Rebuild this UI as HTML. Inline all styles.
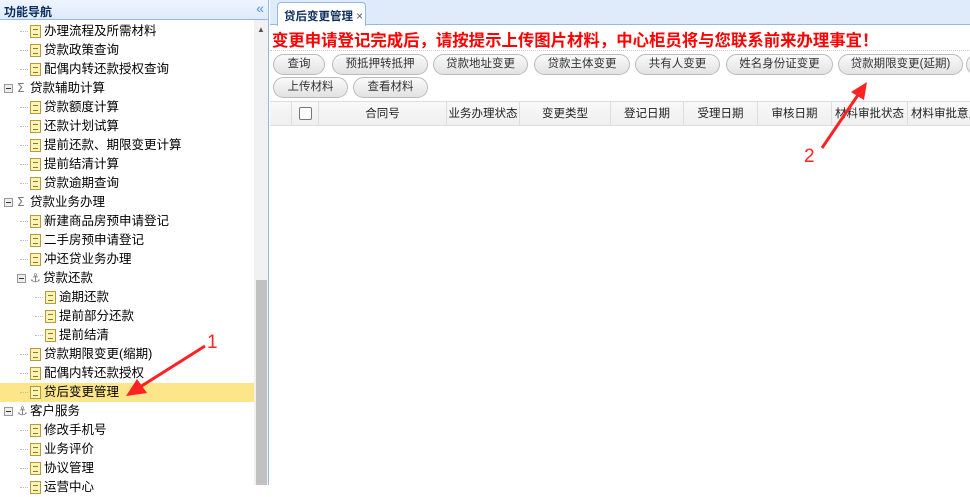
<!DOCTYPE html>
<html><head><meta charset="utf-8"><style>
*{margin:0;padding:0;box-sizing:border-box}
body{width:970px;height:485px;overflow:hidden;background:#fff;font-family:"Liberation Sans","Noto Sans CJK SC",sans-serif;font-size:12px;color:#000;position:relative}
.a{position:absolute}
#lh{left:0;top:0;width:268px;height:20px;background:linear-gradient(#eff5ff,#dfeafb);border-bottom:1px solid #95b8e7;font-size:12px;font-weight:bold;color:#0e2d5f;padding:3px 4px}
#lp{left:0;top:0;width:269px;height:485px;border-right:1px solid #95b8e7}
.r{position:absolute;left:0;width:254px;height:19px;line-height:19px;font-size:12.5px;white-space:nowrap}
.doc{position:absolute;top:3px;width:11px;height:13px;background:#fdf3b5;border:1px solid #b49b3c}
.doc:after{content:"";position:absolute;left:2px;top:3px;width:5px;height:4px;border-top:1px solid #8a7a30;border-bottom:1px solid #8a7a30}
.mn{position:absolute;top:5px;width:9px;height:9px;border:1px solid #999;background:#eee}
.mn:after{content:"";position:absolute;left:1px;top:3px;width:5px;height:1px;background:#333}
.sg{position:absolute;color:#777;font-family:"DejaVu Sans",serif;font-size:12px}
.dl{position:absolute;top:9px;width:8px;border-top:1px dotted #bbb}
#sb{left:254px;top:20px;width:14px;height:465px;background:#f1f1f1}
#th{left:256px;top:280px;width:11px;height:205px;background:#c1c1c1}
#tb{left:270px;top:0;width:700px;height:25px;background:#dfeafb;border-bottom:1px solid #95b8e7}
#tab{left:277px;top:2px;width:89px;height:24px;background:#fff;border:1px solid #95b8e7;border-bottom:none;border-radius:4px 4px 0 0;font-size:11.5px;color:#0e2d5f;font-weight:bold;padding:5px 0 0 6px}
#red{left:272px;top:27px;color:#f00;font-weight:bold;font-size:16.4px;white-space:nowrap}
.b{position:absolute;height:21px;border:1px solid #bbb;border-radius:11px;background:linear-gradient(#fafafa,#e2e2e2);font-size:11.5px;color:#333;text-align:center;line-height:19px}
#hd{left:270px;top:101px;width:700px;height:25px;background:linear-gradient(#f9f9f9,#efefef);border-top:1px solid #ddd;border-bottom:1px solid #ddd}
.c{position:absolute;top:0;height:24px;line-height:24px;border-right:1px solid #ddd;text-align:center;font-size:11.5px;white-space:nowrap;overflow:hidden;color:#222}
</style></head><body>
<div class="a" id="lp"></div>
<div class="a" id="lh">功能导航<span style="position:absolute;right:4px;top:0;color:#4a8fd9;font-weight:normal;font-size:14px">«</span></div>
<div class="a" id="sb"></div><div class="a" id="th"></div>
<div class="a" style="left:257px;top:25px;color:#555;font-size:8px">▲</div>
<div class="r" style="top:383px;background:#fde68a"></div>
<div id="tree"></div>
<div class="a" id="tb"></div>
<div class="a" id="tab">贷后变更管理 <span style="font-weight:normal;color:#555">×</span></div>
<div class="a" id="red">变更申请登记完成后，请按提示上传图片材料，中心柜员将与您联系前来办理事宜！</div>
<div class="a" style="left:270px;top:50px;width:700px;border-top:1px dotted #ccc"></div>
<div class="b" style="left:273px;top:54px;width:52px">查询</div>
<div class="b" style="left:332px;top:54px;width:96px">预抵押转抵押</div>
<div class="b" style="left:433px;top:54px;width:95px">贷款地址变更</div>
<div class="b" style="left:534px;top:54px;width:96px">贷款主体变更</div>
<div class="b" style="left:635px;top:54px;width:85px">共有人变更</div>
<div class="b" style="left:726px;top:54px;width:107px">姓名身份证变更</div>
<div class="b" style="left:838px;top:54px;width:125px">贷款期限变更(延期)</div>
<div class="b" style="left:966px;top:54px;width:30px"></div>
<div class="b" style="left:273px;top:77px;width:75px">上传材料</div>
<div class="b" style="left:353px;top:77px;width:75px">查看材料</div>
<div class="a" id="hd">
<div class="c" style="left:0;width:22px"></div>
<div class="c" style="left:22px;width:27px"><span style="display:inline-block;width:13px;height:13px;border:1px solid #777;border-radius:2px;background:#fff;vertical-align:middle"></span></div>
<div class="c" style="left:49px;width:128px">合同号</div>
<div class="c" style="left:177px;width:73px">业务办理状态</div>
<div class="c" style="left:250px;width:91px">变更类型</div>
<div class="c" style="left:341px;width:73px">登记日期</div>
<div class="c" style="left:414px;width:74px">受理日期</div>
<div class="c" style="left:488px;width:74px">审核日期</div>
<div class="c" style="left:562px;width:76px">材料审批状态</div>
<div class="c" style="left:638px;width:70px;text-align:left;padding-left:3px">材料审批意见</div>
</div>
<svg class="a" style="left:0;top:0" width="970" height="485">
<g stroke="#f22" stroke-width="3" fill="#f22">
<line x1="205" y1="346" x2="140" y2="387"/>
<polygon points="126,396 137,379 147,393" stroke="none"/>
<line x1="822" y1="148" x2="858" y2="95"/>
<polygon points="867,82 851,92 864,100" stroke="none"/>
</g>
<text x="207" y="348" fill="#f22" font-size="19" font-family="Liberation Sans">1</text>
<text x="804" y="162" fill="#f22" font-size="19" font-family="Liberation Sans">2</text>
</svg>
<script>
var d=[[1,'办理流程及所需材料'],[1,'贷款政策查询'],[1,'配偶内转还款授权查询'],[0,'贷款辅助计算','s'],[1,'贷款额度计算'],[1,'还款计划试算'],[1,'提前还款、期限变更计算'],[1,'提前结清计算'],[1,'贷款逾期查询'],[0,'贷款业务办理','s'],[1,'新建商品房预申请登记'],[1,'二手房预申请登记'],[1,'冲还贷业务办理'],[1,'贷款还款','a'],[2,'逾期还款'],[2,'提前部分还款'],[2,'提前结清'],[1,'贷款期限变更(缩期)'],[1,'配偶内转还款授权'],[1,'贷后变更管理'],[0,'客户服务','a'],[1,'修改手机号'],[1,'业务评价'],[1,'协议管理'],[1,'运营中心']];
var h='';d.forEach(function(e,i){var t=22+i*19,l=e[0],x;h+='<div class="r" style="top:'+t+'px">';
if(e[2]){x=l==0?4:17;h+='<span class="mn" style="left:'+x+'px"></span><span class="sg" style="left:'+(x+13)+'px">'+(e[2]=='s'?'Σ':'\u2693\uFE0E')+'</span><span style="position:absolute;left:'+(x+26)+'px">'+e[1]+'</span>';}
else{x=l==1?30:45;h+='<span class="dl" style="left:'+(x-10)+'px"></span><span class="doc" style="left:'+x+'px"></span><span style="position:absolute;left:'+(x+14)+'px">'+e[1]+'</span>';}
h+='</div>';});document.getElementById('tree').innerHTML=h;
</script>
</body></html>
